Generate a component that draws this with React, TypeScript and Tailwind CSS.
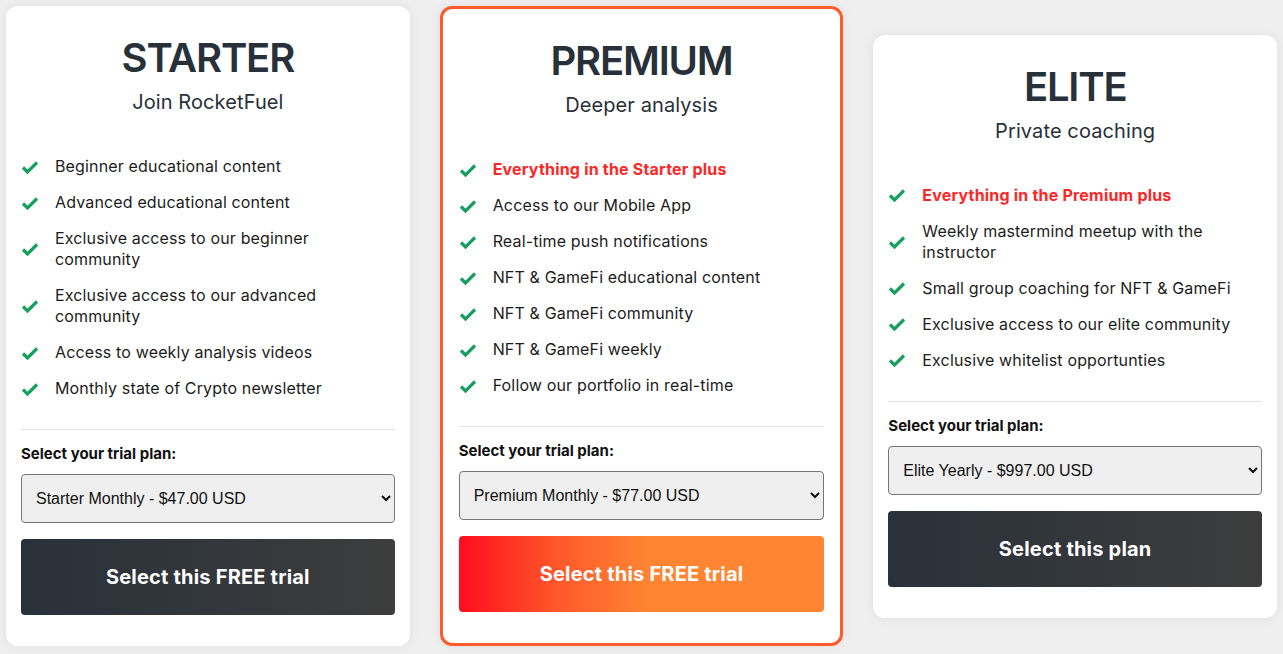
import React from "react";

type Item = { text: string; highlight?: boolean };
type Plan = {
  title: string;
  subtitle: string;
  items: Item[];
  option: string;
  cta: string;
  featured?: boolean;
};

const plans: Plan[] = [
  {
    title: "STARTER",
    subtitle: "Join RocketFuel",
    items: [
      { text: "Beginner educational content" },
      { text: "Advanced educational content" },
      { text: "Exclusive access to our beginner community" },
      { text: "Exclusive access to our advanced community" },
      { text: "Access to weekly analysis videos" },
      { text: "Monthly state of Crypto newsletter" },
    ],
    option: "Starter Monthly - $47.00 USD",
    cta: "Select this FREE trial",
  },
  {
    title: "PREMIUM",
    subtitle: "Deeper analysis",
    items: [
      { text: "Everything in the Starter plus", highlight: true },
      { text: "Access to our Mobile App" },
      { text: "Real-time push notifications" },
      { text: "NFT & GameFi educational content" },
      { text: "NFT & GameFi community" },
      { text: "NFT & GameFi weekly" },
      { text: "Follow our portfolio in real-time" },
    ],
    option: "Premium Monthly - $77.00 USD",
    cta: "Select this FREE trial",
    featured: true,
  },
  {
    title: "ELITE",
    subtitle: "Private coaching",
    items: [
      { text: "Everything in the Premium plus", highlight: true },
      { text: "Weekly mastermind meetup with the instructor" },
      { text: "Small group coaching for NFT & GameFi" },
      { text: "Exclusive access to our elite community" },
      { text: "Exclusive whitelist opportunties" },
    ],
    option: "Elite Yearly - $997.00 USD",
    cta: "Select this plan",
  },
];

function Check() {
  return (
    <svg width="18" height="14" viewBox="0 0 18 14" className="shrink-0">
      <polyline
        points="2,7.5 6.5,12 16,2.5"
        fill="none"
        stroke="#17a05d"
        strokeWidth="3.2"
        strokeLinecap="butt"
        strokeLinejoin="miter"
      />
    </svg>
  );
}

function Card({ plan }: { plan: Plan }) {
  const base =
    "bg-white rounded-[12px] pt-[28px] pb-[31px] shadow-[0_0_12px_rgba(0,0,0,0.07)]";
  const cls = plan.featured
    ? `${base} border-[3px] border-[#ff5a2a] px-[16px]`
    : `${base} px-[15px]`;
  return (
    <div className={cls}>
      <h2 className="text-center text-[40px] leading-[48px] font-semibold tracking-[-1.2px] text-[#283039]">
        {plan.title}
      </h2>
      <p className="mt-[6px] text-center text-[20px] leading-[28px] tracking-[0.1px] text-[#283039]">
        {plan.subtitle}
      </p>
      <ul className="mt-[40px] flex flex-col gap-[15px]">
        {plan.items.map((it) => (
          <li key={it.text} className="flex items-center">
            <div className="w-[34px] shrink-0 flex items-center">
              <Check />
            </div>
            <span
              className={
                it.highlight
                  ? "text-[16px] leading-[21px] tracking-[0.2px] font-bold text-[#ff2626]"
                  : "text-[16px] leading-[21px] tracking-[0.15px] text-[#1c1c1c]"
              }
            >
              {it.text}
            </span>
          </li>
        ))}
      </ul>
      <div className="mt-[30px] h-px bg-[#e4e4e4]" />
      <div className="mt-[14px] text-[15px] leading-[20px] font-bold text-[#111]">
        Select your trial plan:
      </div>
      <select
        defaultValue={plan.option}
        className="mt-[10px] h-[49px] w-full rounded-[4px] border border-[#767676] bg-[#efefef] pl-[10px] pr-[4px] text-[16px] text-[#111] [font-family:'Liberation_Sans',Arial,sans-serif]"
      >
        <option>{plan.option}</option>
      </select>
      <button
        className={
          plan.featured
            ? "mt-[16px] flex h-[76px] w-full items-center justify-center rounded-[4px] bg-[linear-gradient(90deg,#ff0d1f_0%,#ff5a2b_28%,#ff8533_52%,#ff8533_100%)] text-[20px] font-bold tracking-[0.2px] text-white"
            : "mt-[16px] flex h-[76px] w-full items-center justify-center rounded-[4px] bg-[linear-gradient(90deg,#29313a_0%,#3d3d3d_100%)] text-[20px] font-bold tracking-[0.2px] text-white"
        }
      >
        {plan.cta}
      </button>
    </div>
  );
}

export default function App() {
  return (
    <div className="min-h-[654px] w-full bg-[#efefef] p-[6px] [font-family:Inter,'Noto_Sans',sans-serif]">
      <div className="grid grid-cols-3 items-center gap-[30px]">
        {plans.map((p) => (
          <Card key={p.title} plan={p} />
        ))}
      </div>
    </div>
  );
}
